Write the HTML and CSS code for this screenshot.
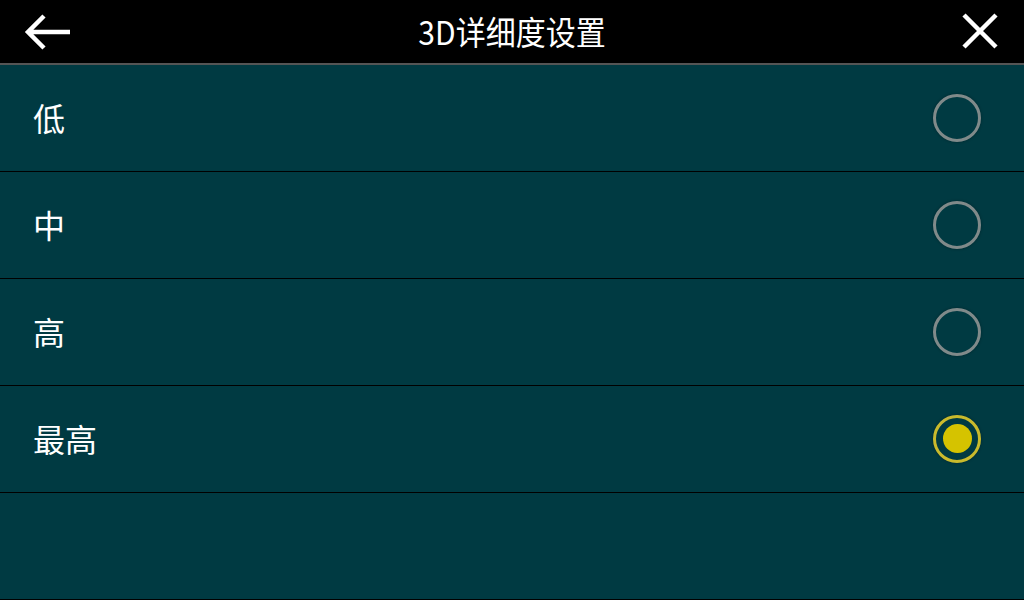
FILE: index.html
```html
<!DOCTYPE html>
<html lang="zh">
<head>
<meta charset="utf-8">
<link rel="stylesheet" href="styles.css">
</head>
<body>
<div class="app">
  <header class="topbar">
    <button class="icon-btn back" aria-label="返回">
      <svg width="50" height="40" viewBox="0 0 50 40"><path d="M47 21H6M21 5L5 21L21 37" fill="none" stroke="#fff" stroke-width="4.5" stroke-linejoin="miter"/></svg>
    </button>
    <h1 class="title">3D详细度设置</h1>
    <button class="icon-btn close" aria-label="关闭">
      <svg width="40" height="40" viewBox="0 0 40 40"><path d="M4 4L36 36M36 4L4 36" fill="none" stroke="#fff" stroke-width="4.5"/></svg>
    </button>
  </header>
  <ul class="list">
    <li class="row"><span class="label">低</span><span class="radio"></span></li>
    <li class="row"><span class="label">中</span><span class="radio"></span></li>
    <li class="row"><span class="label">高</span><span class="radio"></span></li>
    <li class="row"><span class="label">最高</span><span class="radio checked"></span></li>
    <li class="row empty"></li>
  </ul>
</div>
</body>
</html>
```

FILE: styles.css
```css
html, body {
  margin: 0;
  padding: 0;
  width: 1024px;
  height: 600px;
  overflow: hidden;
  background: #003a42;
  font-family: "Noto Sans CJK SC", "Noto Sans", sans-serif;
  color: #fff;
}
.app {
  display: flex;
  flex-direction: column;
  height: 600px;
}
.topbar {
  height: 63px;
  background: #000;
  border-bottom: 2px solid #555;
  display: flex;
  align-items: center;
  justify-content: space-between;
  position: relative;
}
.icon-btn {
  background: none;
  border: 0;
  padding: 0;
  display: flex;
  align-items: center;
  justify-content: center;
}
.back {
  margin-left: 23px;
  margin-top: -1px;
}
.close {
  margin-right: 24px;
  margin-top: -1px;
}
.title {
  margin: 0;
  font-weight: normal;
  font-size: 30px;
  letter-spacing: 0;
  transform: scaleY(1.1);
  line-height: 63px;
  position: absolute;
  left: 0;
  right: 0;
  text-align: center;
  pointer-events: none;
}
.list {
  list-style: none;
  margin: 0;
  padding: 0;
  display: flex;
  flex-direction: column;
}
.row {
  height: 106px;
  border-bottom: 1px solid #000;
  display: flex;
  align-items: center;
  justify-content: space-between;
  padding: 0 43px 0 33px;
}
.label {
  font-size: 32px;
  line-height: 1;
  margin-top: -3px;
}
.radio {
  width: 42px;
  height: 42px;
  border: 3px solid #808a8a;
  border-radius: 50%;
  box-shadow: 0 0 3px rgba(0,0,0,0.35);
  display: flex;
  align-items: center;
  justify-content: center;
  margin-top: -1px;
}
.radio.checked {
  border-color: #c9ba2c;
}
.radio.checked::after {
  content: "";
  width: 29px;
  height: 29px;
  border-radius: 50%;
  background: #d5c300;
}
```
